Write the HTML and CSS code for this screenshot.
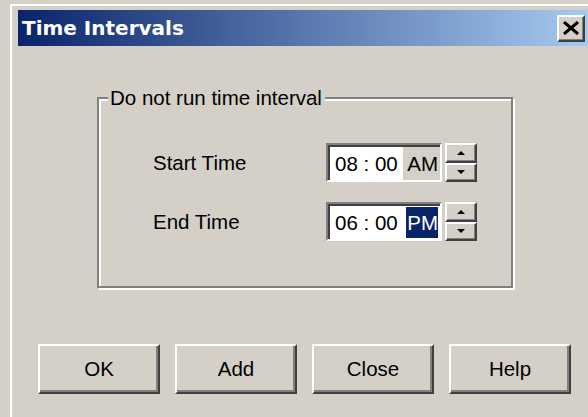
FILE: index.html
```html
<!DOCTYPE html>
<html lang="en">
<head>
<meta charset="utf-8">
<title>Time Intervals</title>
<link rel="stylesheet" href="styles.css">
</head>
<body>
<div class="window">
  <div class="titlebar">
    <span class="title">Time Intervals</span>
    <button class="close-btn" aria-label="Close">
      <svg width="18" height="14" viewBox="0 0 18 14"><path d="M2 1 L16 13 M16 1 L2 13" stroke="#000" stroke-width="3" fill="none"/></svg>
    </button>
  </div>
  <div class="client">
    <div class="group">
      <span class="group-label">Do not run time interval</span>
      <div class="time-row">
        <span class="row-label">Start Time</span>
        <div class="time-field">
          <span class="time-value">08 : 00</span>
          <span class="ampm ampm--dim"><span class="seg">AM</span></span>
        </div>
        <div class="spinner">
          <button class="spin-btn" aria-label="Up"><svg width="8" height="4" viewBox="0 0 8 4"><path d="M0 4 L4 0 L8 4 Z" fill="#000"/></svg></button>
          <button class="spin-btn" aria-label="Down"><svg width="8" height="4" viewBox="0 0 8 4"><path d="M0 0 L8 0 L4 4 Z" fill="#000"/></svg></button>
        </div>
      </div>
      <div class="time-row">
        <span class="row-label">End Time</span>
        <div class="time-field">
          <span class="time-value">06 : 00</span>
          <span class="ampm ampm--selected"><span class="seg">PM</span></span>
        </div>
        <div class="spinner">
          <button class="spin-btn" aria-label="Up"><svg width="8" height="4" viewBox="0 0 8 4"><path d="M0 4 L4 0 L8 4 Z" fill="#000"/></svg></button>
          <button class="spin-btn" aria-label="Down"><svg width="8" height="4" viewBox="0 0 8 4"><path d="M0 0 L8 0 L4 4 Z" fill="#000"/></svg></button>
        </div>
      </div>
    </div>
    <div class="buttons">
      <button class="btn">OK</button>
      <button class="btn">Add</button>
      <button class="btn">Close</button>
      <button class="btn">Help</button>
    </div>
  </div>
</div>
</body>
</html>
```

FILE: styles.css
```css
html, body {
  margin: 0;
  padding: 0;
  background: #d4d0c8;
  overflow: hidden;
}

body {
  font-family: "Liberation Sans", Arial, sans-serif;
  font-size: 20.5px;
  color: #000;
}

.window {
  box-sizing: border-box;
  margin: 4px 0 0 10px;
  height: 413px;
  border-top: 2px solid #fff;
  border-left: 2px solid #fff;
  padding: 4px 0 0 6px;
}

/* caption bar */
.titlebar {
  height: 36px;
  display: flex;
  align-items: center;
  padding-left: 4px;
  background: linear-gradient(to right, #0a246a, #a6caf0);
}

.title {
  font-family: "DejaVu Sans", Verdana, sans-serif;
  font-weight: bold;
  font-size: 20px;
  color: #fff;
  letter-spacing: 0;
}

.close-btn {
  margin-left: auto;
  margin-right: 3px;
  width: 28px;
  height: 27px;
  padding: 0;
  display: flex;
  align-items: center;
  justify-content: center;
  background: #d4d0c8;
  border: 2px solid;
  border-color: #fff #404040 #404040 #fff;
  box-shadow: inset -1px -1px 0 #808080;
}

/* dialog body */
.client {
  padding-left: 20px;
}

.group {
  position: relative;
  box-sizing: border-box;
  margin: 51px 0 0 59px;
  width: 416px;
  height: 191px;
  padding: 44px 0 0 54px;
  border: 2px solid #808080;
  box-shadow: inset 2px 2px 0 #fff, 2px 2px 0 #fff;
  display: flex;
  flex-direction: column;
  gap: 20px;
}

.group-label {
  position: absolute;
  top: -13px;
  left: 9px;
  padding: 0 3px 0 2px;
  line-height: 24px;
  background: #d4d0c8;
}

.time-row {
  display: flex;
  align-items: center;
  height: 39px;
}

.row-label {
  width: 173px;
}

.time-field {
  box-sizing: border-box;
  width: 116px;
  height: 39px;
  display: flex;
  background: #fff;
  border: 2px solid;
  border-color: #808080 #fff #fff #808080;
  box-shadow: inset 2px 2px 0 #404040;
  padding: 2px 0 0 2px;
}

.time-value {
  width: 72px;
  padding-left: 5px;
  line-height: 33px;
}

.ampm {
  flex: 1;
  display: flex;
  padding: 1px 2px 1px 3px;
}

.ampm--dim {
  background: #d4d0c8;
}

.seg {
  flex: 1;
  line-height: 31px;
  padding-left: 1px;
  overflow: hidden;
  white-space: nowrap;
}

.ampm--selected .seg {
  background: #0a246a;
  color: #fff;
}

.spinner {
  margin-left: 3px;
  width: 32px;
  height: 39px;
  display: flex;
  flex-direction: column;
}

.spin-btn {
  flex: 1;
  box-sizing: border-box;
  padding: 0;
  display: flex;
  align-items: center;
  justify-content: center;
  background: #d4d0c8;
  border: 2px solid;
  border-color: #fff #404040 #404040 #fff;
  box-shadow: inset -1px -1px 0 #808080;
}

/* command buttons */
.buttons {
  display: flex;
  gap: 15px;
  margin-top: 56px;
}

.btn {
  box-sizing: border-box;
  width: 122px;
  height: 50px;
  padding: 0;
  font-family: "Liberation Sans", Arial, sans-serif;
  font-size: 20.5px;
  color: #000;
  background: #d4d0c8;
  border: 2px solid;
  border-color: #fff #404040 #404040 #fff;
  box-shadow: inset -2px -2px 0 #808080;
}
```
